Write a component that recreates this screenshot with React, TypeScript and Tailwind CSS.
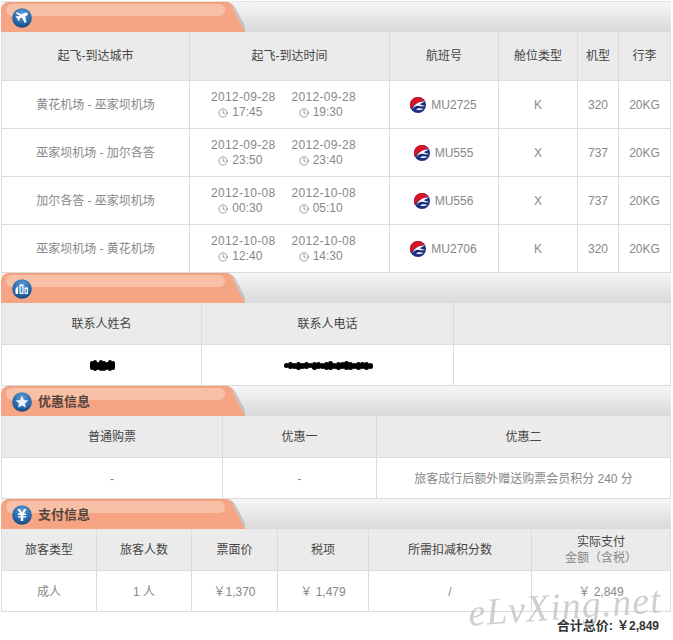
import { Clock } from 'lucide-react';
import type { ReactNode } from 'react';

const FLIGHTS = [
  { route: '黄花机场 - 巫家坝机场', from: ['2012-09-28', '17:45'], to: ['2012-09-28', '19:30'], no: 'MU2725', cabin: 'K', model: '320' },
  { route: '巫家坝机场 - 加尔各答', from: ['2012-09-28', '23:50'], to: ['2012-09-28', '23:40'], no: 'MU555', cabin: 'X', model: '737' },
  { route: '加尔各答 - 巫家坝机场', from: ['2012-10-08', '00:30'], to: ['2012-10-08', '05:10'], no: 'MU556', cabin: 'X', model: '737' },
  { route: '巫家坝机场 - 黄花机场', from: ['2012-10-08', '12:40'], to: ['2012-10-08', '14:30'], no: 'MU2706', cabin: 'K', model: '320' },
];

// heights of the blobs that scribble over the redacted contact details
const NAME_BLOT = [9, 11, 8, 11, 10, 8, 11, 9];
const PHONE_BLOT = [5, 7, 6, 8, 6, 7, 5, 8, 7, 6, 8, 9, 6, 8, 7, 9, 8, 6, 8, 7, 8, 6];

function Badge({ children }: { children: ReactNode }) {
  return (
    <svg viewBox="0 0 20 20" className="relative h-5 w-5 shrink-0">
      <defs>
        <radialGradient id="badge" cx="50%" cy="30%" r="75%">
          <stop offset="0%" stopColor="#5f9fd6" />
          <stop offset="65%" stopColor="#2467a8" />
          <stop offset="100%" stopColor="#123f73" />
        </radialGradient>
      </defs>
      <circle cx="10" cy="10" r="9.8" fill="url(#badge)" />
      {children}
    </svg>
  );
}

const PlaneIcon = (
  <Badge>
    <path d="M3.5 5 L5 4.2 L9 6.3 L12 5.2 C14 4.5 16 5 16 6 C16 7 14.6 7.8 13 8.4 L14.5 14 L12.8 15 L9.8 9.6 L7.4 10.5 L7.6 12.4 L6.4 13 L5.4 10.4 L3.6 8.6 L4.6 8 L6.2 8.6 L7.6 7.6 Z" fill="#fff" />
  </Badge>
);

const ContactIcon = (
  <Badge>
    <path d="M3.5 15 V10 L6 7 V15 Z" fill="#fff" />
    <path d="M7.5 15 V5.5 H11.5 V15 Z M8.7 7 V13.8 H10.3 V7 Z" fill="#fff" fillRule="evenodd" />
    <path d="M12.5 15 V8.5 H16 V15 Z M13.6 10 V13.8 H14.9 V10 Z" fill="#fff" fillRule="evenodd" />
  </Badge>
);

const StarIcon = (
  <Badge>
    <path d="M10 3.8 L11.9 7.9 L16.3 8.4 L13 11.4 L13.9 15.8 L10 13.6 L6.1 15.8 L7 11.4 L3.7 8.4 L8.1 7.9 Z" fill="#e8f1fa" />
  </Badge>
);

const YenIcon = (
  <Badge>
    <path d="M5.5 4 H8 L10 8 L12 4 H14.5 L11.8 8.6 H14 V10 H11.2 V11.2 H14 V12.6 H11.2 V16 H8.8 V12.6 H6 V11.2 H8.8 V10 H6 V8.6 H8.2 Z" fill="#fff" />
  </Badge>
);

function SectionHeader({ icon, title }: { icon: ReactNode; title?: string }) {
  return (
    <div className="flex h-[30px] bg-gradient-to-b from-[#f6f6f6] to-[#d9d9d9]">
      <div className="relative flex w-[223px] items-center gap-[6px] rounded-tl-lg border-t border-[#ee9c78] bg-[#f6a584] pl-[11px] pt-px">
        <div className="absolute left-[5px] right-[-1px] top-[1px] h-[12px] rounded-full bg-[#f8c0a6]" />
        {icon}
        {title && <span className="relative text-[13px] font-bold text-[#54443c]">{title}</span>}
      </div>
      <svg viewBox="0 0 21 30" className="h-[30px] w-[21px] shrink-0">
        <path d="M0 0 C5 0 7 2 9 6 L21 30 H24 L11 5 C9 2 6 0 2 0 Z" fill="#aaaaaa" opacity="0.55" />
        <path d="M0 0 C5 0 7 2 9 6 L21 30 H0 Z" fill="#f6a584" />
        <path d="M0 0.5 C5 0.5 7 2 9 6" fill="none" stroke="#ee9c78" />
      </svg>
    </div>
  );
}

function Row({ cols, h, head, children }: { cols: string; h: string; head?: boolean; children: ReactNode }) {
  return (
    <div className={`grid border-b border-l border-[#dcdcdc] ${cols} ${h} ${head ? 'bg-[#ebebeb] text-[#444]' : 'bg-white text-[#888]'}`}>
      {children}
    </div>
  );
}

function Cell({ children }: { children?: ReactNode }) {
  return <div className="flex items-center justify-center border-r border-[#dcdcdc] text-center">{children}</div>;
}

function TimeBlock({ date, time }: { date: string; time: string }) {
  return (
    <div className="flex flex-col items-center leading-[15px]">
      <span className="tracking-[0.3px]">{date}</span>
      <span className="flex items-center gap-[4px] pr-[6px]">
        <Clock className="h-[10px] w-[10px] text-[#666]" strokeWidth={1.5} />
        {time}
      </span>
    </div>
  );
}

function AirlineLogo() {
  return (
    <svg viewBox="0 0 16 16" className="h-4 w-4 shrink-0">
      <circle cx="8" cy="8" r="8" fill="#1d2f80" />
      <path d="M8 0 A8 8 0 0 0 1 12 C3 8 8 5.5 14.5 4 A8 8 0 0 0 8 0 Z" fill="#d5152a" />
      <path d="M2.5 12 C4 7.5 9 4 15 4.5 L9.5 7.2 L15.5 9.2 C12 9.4 9 9.2 7 8.8 C5 9.5 3.5 10.5 2.5 12 Z" fill="#fff" />
      <path d="M6 12.5 C8 11 11 11 13.5 12 C11.5 13 8.5 13.4 6 12.5 Z" fill="#fff" />
    </svg>
  );
}

function Blot({ heights, w }: { heights: number[]; w: string }) {
  return (
    <div className="flex items-center blur-[0.5px]">
      {heights.map((height, i) => (
        <span key={i} className={`-mr-px rounded-full bg-black ${w}`} style={{ height }} />
      ))}
    </div>
  );
}

const FLIGHT_COLS = 'grid-cols-[188px_200px_109px_79px_41px_52px]';
const CONTACT_COLS = 'grid-cols-[200px_252px_217px]';
const PROMO_COLS = 'grid-cols-[221px_154px_294px]';
const PAY_COLS = 'grid-cols-[95px_95px_86px_91px_163px_139px]';
const SHORT_HEAD = 'h-[42px] [&>div]:pt-px';
const SHORT_ROW = 'h-[41px] [&>div]:pt-px';

export default function App() {
  return (
    <div className="relative h-[640px] w-[673px] overflow-hidden bg-white [font-family:'Liberation_Sans','Noto_Sans_CJK_SC',sans-serif] text-[12px]">
      <div className="ml-px mt-px w-[670px] border-t border-[#e4e4e4]">
        <SectionHeader icon={PlaneIcon} />
        <Row cols={FLIGHT_COLS} h="h-[49px]" head>
          <Cell>起飞-到达城市</Cell>
          <Cell>起飞-到达时间</Cell>
          <Cell>航班号</Cell>
          <Cell>舱位类型</Cell>
          <Cell>机型</Cell>
          <Cell>行李</Cell>
        </Row>
        {FLIGHTS.map((f) => (
          <Row key={f.no} cols={FLIGHT_COLS} h="h-[48px]">
            <Cell>{f.route}</Cell>
            <Cell>
              <div className="mr-[12px] mt-px flex gap-[16px]">
                <TimeBlock date={f.from[0]} time={f.from[1]} />
                <TimeBlock date={f.to[0]} time={f.to[1]} />
              </div>
            </Cell>
            <Cell>
              <div className="mr-px flex items-center gap-[5px]">
                <AirlineLogo />
                {f.no}
              </div>
            </Cell>
            <Cell>{f.cabin}</Cell>
            <Cell>{f.model}</Cell>
            <Cell>20KG</Cell>
          </Row>
        ))}

        <SectionHeader icon={ContactIcon} />
        <Row cols={CONTACT_COLS} h={SHORT_HEAD} head>
          <Cell>联系人姓名</Cell>
          <Cell>联系人电话</Cell>
          <Cell />
        </Row>
        <Row cols={CONTACT_COLS} h={SHORT_ROW}>
          <Cell>
            <Blot heights={NAME_BLOT} w="w-[4px]" />
          </Cell>
          <Cell>
            <Blot heights={PHONE_BLOT} w="w-[5px]" />
          </Cell>
          <Cell />
        </Row>

        <SectionHeader icon={StarIcon} title="优惠信息" />
        <Row cols={PROMO_COLS} h={SHORT_HEAD} head>
          <Cell>普通购票</Cell>
          <Cell>优惠一</Cell>
          <Cell>优惠二</Cell>
        </Row>
        <Row cols={PROMO_COLS} h={SHORT_ROW}>
          <Cell>-</Cell>
          <Cell>-</Cell>
          <Cell>旅客成行后额外赠送购票会员积分 240 分</Cell>
        </Row>

        <SectionHeader icon={YenIcon} title="支付信息" />
        <Row cols={PAY_COLS} h="h-[42px]" head>
          <Cell>旅客类型</Cell>
          <Cell>旅客人数</Cell>
          <Cell>票面价</Cell>
          <Cell>税项</Cell>
          <Cell>所需扣减积分数</Cell>
          <Cell>
            <div className="flex flex-col leading-[16px]">
              <span>实际支付</span>
              <span className="text-[#888]">金额（含税）</span>
            </div>
          </Cell>
        </Row>
        <Row cols={PAY_COLS} h={SHORT_ROW}>
          <Cell>成人</Cell>
          <Cell>1 人</Cell>
          <Cell>￥1,370</Cell>
          <Cell>￥ 1,479</Cell>
          <Cell>/</Cell>
          <Cell>￥ 2,849</Cell>
        </Row>
      </div>

      <div className="flex h-[28px] items-center justify-end pr-[14px] text-[13px] font-bold text-[#333]">
        合计总价: <span className="ml-[4px] text-[12px]">￥2,849</span>
      </div>

      <div className="pointer-events-none absolute left-[468px] top-[584px] -rotate-[4deg] [font-family:'Liberation_Serif',serif] text-[38px] italic leading-[44px] tracking-[1px] text-[#c4c4c4] opacity-80">
        eLvXing.net
      </div>
    </div>
  );
}
